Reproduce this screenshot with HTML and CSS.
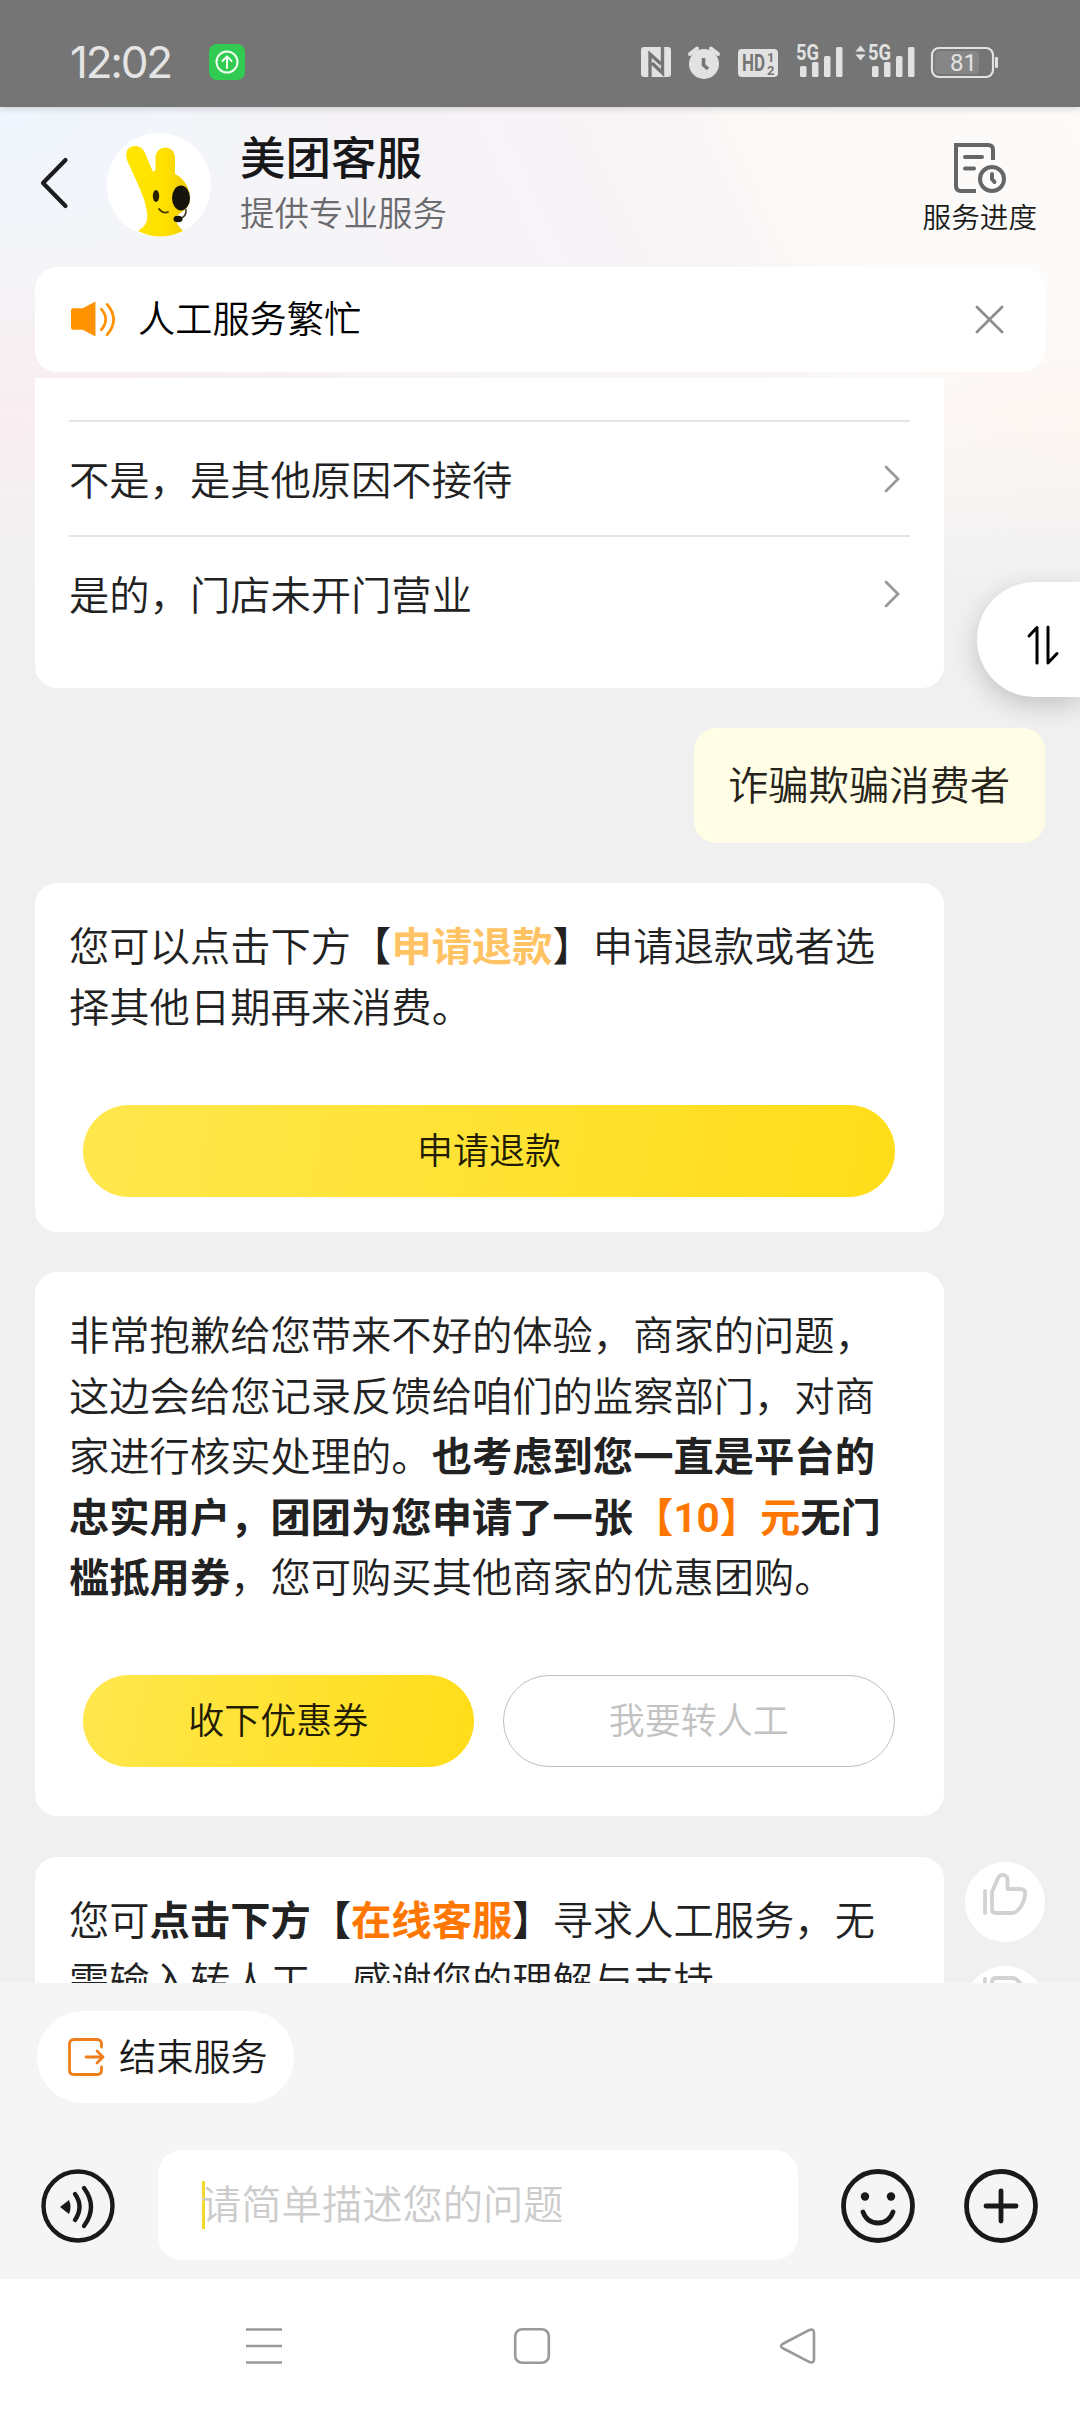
FILE: index.html
```html
<!DOCTYPE html>
<html lang="zh-CN">
<head>
<meta charset="utf-8">
<title>美团客服</title>
<link rel="stylesheet" href="styles.css">
</head>
<body>
<div class="screen">
  <div class="status">
    <span class="clock">12:02</span>
    <svg class="badge" viewBox="0 0 36 36"><rect width="36" height="36" rx="8" fill="#30cb50"/><g fill="none" stroke="#f2fff2" stroke-width="2" stroke-linecap="round" stroke-linejoin="round"><circle cx="18" cy="18" r="10.5"/><path d="M18 24V12.500M13.500 17l4.500-4.500 4.500 4.500"/></g></svg>
    <svg class="signals" viewBox="0 0 360 44" fill="#e2e2e2">
      <rect x="1" y="7" width="30" height="30" rx="3"/>
      <path d="M10 37V14l11 10M22.500 7v26L12 23" fill="none" stroke="#757575" stroke-width="3.400"/>
      <circle cx="64" cy="24" r="15"/>
      <path d="M50 14l7-5.500M78 14l-7-5.500" stroke="#e2e2e2" stroke-width="4" stroke-linecap="round"/>
      <path d="M63.500 18v7l4.500 4" fill="none" stroke="#757575" stroke-width="3.600"/>
      <rect x="98" y="9" width="40" height="28" rx="4"/>
      <g class="hd" fill="#757575"><text x="102" y="31" textLength="23" lengthAdjust="spacingAndGlyphs" font-size="23">HD</text><text x="127" y="22" font-size="13">1</text><text x="127" y="35" font-size="13">2</text></g>
      <g class="net"><text x="156" y="20" textLength="23" lengthAdjust="spacingAndGlyphs">5G</text><text x="228" y="20" textLength="23" lengthAdjust="spacingAndGlyphs">5G</text></g>
      <rect x="160" y="26" width="6.500" height="11" rx="1.500"/><rect x="172" y="22" width="6.500" height="15" rx="1.500"/><rect x="184" y="16" width="6.500" height="21" rx="1.500"/><rect x="196" y="7" width="6.500" height="30" rx="1.500"/>
      <rect x="232" y="26" width="6.500" height="11" rx="1.500"/><rect x="244" y="22" width="6.500" height="15" rx="1.500"/><rect x="256" y="16" width="6.500" height="21" rx="1.500"/><rect x="268" y="7" width="6.500" height="30" rx="1.500"/>
      <path d="M215.500 11.500l5-6 5 6zM215.500 14.500l5 6 5-6z"/>
      <rect x="292" y="8" width="61" height="29" rx="7" fill="none" stroke="#e2e2e2" stroke-width="2.200"/>
      <rect x="295" y="11" width="44" height="23" rx="4" fill="#868686"/>
      <rect x="355" y="17" width="3" height="11" rx="1"/>
      <text class="level" x="310" y="31" font-size="24">81</text>
    </svg>
  </div>

  <header class="header">
    <svg class="back" viewBox="0 0 28 52"><path d="M25.500 3L3 26l22.500 23" fill="none" stroke="#1c1c1e" stroke-width="4.200" stroke-linecap="round" stroke-linejoin="round"/></svg>
    <svg class="avatar" viewBox="0 0 104 104">
      <defs><linearGradient id="skin" x1="0" x2="1"><stop offset="0" stop-color="#ffe600"/><stop offset=".6" stop-color="#ffe100"/><stop offset="1" stop-color="#f0c800"/></linearGradient></defs>
      <circle cx="52" cy="52" r="52" fill="#fff"/>
      <path d="M20 27C15 11 34 9 38 20L46 39L48.500 37L48.500 25C48.500 11 68 11 68 25L68 41C78 46 83 56 83 66C83 76 73 79 69 84C69 92 73 94 76 98Q53 109 31 98C39 93 41 88 40 80C39 66 30 50 20 27Z" fill="url(#skin)"/>
      <ellipse cx="49" cy="63" rx="3.200" ry="6" fill="#2a2100"/>
      <ellipse cx="74" cy="65" rx="9" ry="12.500" fill="#17140d"/>
      <path d="M52 76q4 5 9 3" fill="none" stroke="#4a3900" stroke-width="1.800" stroke-linecap="round"/>
      <path d="M79 76q1 8-7 10" fill="none" stroke="#3b3523" stroke-width="1.500"/>
      <ellipse cx="71" cy="86" rx="4.500" ry="3.300" fill="#17140d"/>
    </svg>
    <div class="who"><h1>美团客服</h1><p>提供专业服务</p></div>
    <div class="progress">
      <svg viewBox="0 0 52 50" fill="none" stroke="#666" stroke-width="4" stroke-linecap="round"><path d="M39 17V7q0-5-5-5H2V43q0 5 5 5h15" stroke-linecap="butt"/><path d="M11 14h17M11 25.500h9M38 31v5l2.500 3"/><circle cx="38" cy="36" r="12"/></svg>
      <span>服务进度</span>
    </div>
  </header>

  <div class="notice">
    <svg class="speaker" viewBox="0 0 46 38" fill="none" stroke="#ff9200" stroke-width="2.800" stroke-linecap="round"><path d="M2 8h10L25 1v36L12 30H2Q0 30 0 28V10Q0 8 2 8z" fill="#ff9200" stroke="none"/><path d="M31 9q9 10.500 0 21M37 4q13 15.500 0 31"/></svg>
    <span>人工服务繁忙</span>
    <svg class="close" viewBox="0 0 30 30"><path d="M2 2l26 26M28 2L2 28" stroke="#8d8d8d" stroke-width="2.800" stroke-linecap="round"/></svg>
  </div>

  <main class="chat">
    <section class="card options">
      <div class="option"><span>不是，是其他原因不接待</span><svg viewBox="0 0 16 28"><path d="M2 2l12 12L2 26"/></svg></div>
      <div class="option"><span>是的，门店未开门营业</span><svg viewBox="0 0 16 28"><path d="M2 2l12 12L2 26"/></svg></div>
    </section>
    <div class="mine">诈骗欺骗消费者</div>
    <section class="card refund">
      <p>您可以点击下方【<b class="soft">申请退款</b>】申请退款或者选<br>择其他日期再来消费。</p>
      <div class="actions"><span class="btn">申请退款</span></div>
    </section>
    <section class="card coupon">
      <p>非常抱歉给您带来不好的体验，商家的问题，<br>这边会给您记录反馈给咱们的监察部门，对商<br>家进行核实处理的。<b>也考虑到您一直是平台的<br>忠实用户，团团为您申请了一张<em>【<i>10</i>】元</em>无门<br>槛抵用券</b>，您可购买其他商家的优惠团购。</p>
      <div class="actions"><span class="btn">收下优惠券</span><span class="btn ghost">我要转人工</span></div>
    </section>
    <div class="rated">
      <section class="card agent">
        <p>您可<b>点击下方【<em>在线客服</em>】</b>寻求人工服务，无<br>需输入转人工，感谢您的理解与支持。</p>
      </section>
      <div class="votes">
        <span><svg viewBox="0 0 44 46"><path d="M2 19v22M9 20L15 6Q17 2 21 3Q25 4 24.500 9V17H37Q43 17 42 23Q41 32 35 38Q33 41 29 41H13Q9 41 9 37Z"/></svg></span>
        <span><svg viewBox="0 0 44 46"><path d="M2 3v22M9 24L15 36Q17 41 21 40Q25 39 24.500 34V26H37Q43 26 42 20Q41 10 35 5Q33 2 29 2H13Q9 2 9 6Z"/></svg></span>
      </div>
    </div>
  </main>

  <div class="composer">
    <div class="quick">
      <svg viewBox="0 0 37 38" fill="none" stroke="#ee7d1c" stroke-width="2.800" stroke-linecap="round" stroke-linejoin="round"><path d="M33.500 9V6q0-4.500-4.500-4.500H6Q1.500 1.500 1.500 6V32q0 4.500 4.500 4.500H29q4.500 0 4.500-4.500v-3M18 19h17M29 13l6 6-6 6"/></svg>
      <span>结束服务</span>
    </div>
    <div class="entry">
      <svg class="round" viewBox="0 0 74 74" fill="none" stroke="#191919" stroke-width="4.400" stroke-linecap="round"><circle cx="37" cy="37" r="34.500"/><path d="M19 38l9-7q3 7 0 14z" fill="#191919" stroke="none"/><path d="M34 25q9 12.500 0 26M43 19q14 19 0 38"/></svg>
      <div class="field"><i class="caret"></i><span>请简单描述您的问题</span></div>
      <svg class="round smile" viewBox="0 0 74 74" fill="none" stroke="#191919" stroke-width="4.800" stroke-linecap="round"><circle cx="37" cy="37" r="34.500"/><path d="M22 43q4 11 15 11t15-11"/><g fill="#191919" stroke="none"><circle cx="24" cy="27.500" r="4.200"/><circle cx="50" cy="27.500" r="4.200"/></g></svg>
      <svg class="round" viewBox="0 0 74 74" fill="none" stroke="#191919" stroke-width="4.800" stroke-linecap="round"><circle cx="37" cy="37" r="34.500"/><path d="M22 37h30M37 22v30"/></svg>
    </div>
  </div>

  <nav class="nav">
    <svg viewBox="0 0 36 36"><path d="M0 1.500h36M0 18h36M0 34.500h36"/></svg>
    <svg viewBox="0 0 36 36"><rect x="1.200" y="1.200" width="33.600" height="33.600" rx="7"/></svg>
    <svg viewBox="0 0 36 36"><path d="M.5 16L27 2.200Q32 0 32 5V31Q32 36 27 33.800L.5 20Q-2.500 18 .5 16z"/></svg>
  </nav>

  <div class="float"><svg viewBox="0 0 32 40" fill="none" stroke="#000" stroke-width="3" stroke-linecap="round" stroke-linejoin="round"><path d="M2 11l8-8.500V38M21 2v36l9-9.500"/></svg></div>
</div>
</body>
</html>
```
FILE: styles.css
```css
* { box-sizing: border-box; margin: 0; padding: 0; }
body { font-family: "Noto Sans CJK SC", "Noto Sans", sans-serif; font-weight: 350; color: #222; text-spacing-trim: space-all; }
svg { display: block; flex: none; overflow: visible; }
.screen {
  position: relative; width: 1080px; height: 2412px; overflow: hidden; display: flex; flex-direction: column;
  background:
    linear-gradient(#f0f0f000 420px, #f0f0f0 600px),
    radial-gradient(ellipse 330px 200px at 0 110px, #f0f6fd 10%, #f0f6fd00),
    radial-gradient(ellipse 620px 180px at 0 430px, #f9edf1, #f9edf100),
    radial-gradient(ellipse 320px 150px at 1080px 440px, #fdf5f1, #fdf5f100),
    linear-gradient(65deg, #f5f4f7 0 1180px, #f8f3f6 1300px, #f9f3f5 1400px, #fcfaf9 1480px, #fcfbf9 100%) 0 0 / 1080px 620px no-repeat,
    #f0f0f0;
  background-image:
    linear-gradient(#f0f0f000 420px, #f0f0f0 600px),
    radial-gradient(ellipse 330px 200px at 0 110px, #f0f6fd 10%, #f0f6fd00),
    radial-gradient(ellipse 620px 180px at 0 430px, #f9edf1, #f9edf100),
    radial-gradient(ellipse 320px 150px at 1080px 440px, #fdf5f1, #fdf5f100),
    linear-gradient(65deg, #f5f4f7 0 35%, #f8f3f6 58%, #f9f4f5 66%, #fcfaf9 72%, #fcfbf9 100%);
}
.status { flex: none; height: 107px; background: #757575; box-shadow: 0 1px 8px #0000002e; display: flex; align-items: center; padding: 17px 80px 0 70px; z-index: 1; }
.clock { font: 44px/44px Inter, Roboto, sans-serif; color: #e4e4e4; width: 139px; letter-spacing: -2.200px; }
.badge { width: 36px; height: 36px; }
.signals { width: 360px; height: 44px; margin-left: auto; font-family: Roboto, sans-serif; }
.hd { font-weight: 700; }
.net { font-size: 21.500px; font-weight: 700; }
.level { font-weight: 400; }

.header { flex: none; height: 160px; display: flex; align-items: center; padding: 0 43px 8px 40px; }
.back { width: 28px; height: 52px; }
.avatar { width: 104px; height: 104px; margin: 4px 29px 0 39px; }
.who h1 { font-size: 45.500px; line-height: 54px; font-weight: 500; color: #18181a; }
.who p { font-size: 34.500px; line-height: 54px; color: #6b6a6d; padding-top: 2px; }
.progress { margin-left: auto; display: flex; flex-direction: column; align-items: center; font-size: 28.600px; line-height: 44px; color: #1a1a1a; padding-top: 14px; }
.progress svg { width: 52px; height: 50px; margin-bottom: 1px; }

.notice { flex: none; height: 105px; margin: 0 35px 5px; padding: 0 41px 0 36px; border-radius: 22px; background: #fff; display: flex; align-items: center; font-size: 37.200px; color: #000; }
.speaker { width: 45px; height: 38px; margin: 0 22px 2px 0; }
.notice span { line-height: 40px; padding-bottom: 5px; }
.close { width: 29px; height: 29px; margin-left: auto; }

.chat { flex: 1; min-height: 0; overflow: hidden; padding: 1px 35px 0; display: flex; flex-direction: column; align-items: flex-start; gap: 40px; font-size: 40.300px; line-height: 60.500px; white-space: nowrap; }
.card { flex: none; width: 909px; background: #fff; border-radius: 22px; padding: 31px 34px 0; }
.options { height: 310px; border-radius: 0 0 22px 22px; padding-top: 42px; }
.option { height: 115px; border-top: 2px solid #e5e5e5; display: flex; justify-content: space-between; align-items: center; padding-right: 10px; }
.option span { padding-bottom: 1px; }
.option svg { width: 16px; height: 28px; fill: none; stroke: #999; stroke-width: 2.800; stroke-linecap: round; }
.mine { flex: none; align-self: flex-end; width: 351px; height: 115px; border-radius: 22px; background: #fffde6; padding: 25px 34px; color: #26241a; }
.refund { height: 349px; }
.coupon { height: 544px; }
em, i { font-style: normal; }
em { color: #ff7700; }
i { font-family: Roboto, sans-serif; line-height: 0; }
.soft { color: #ffc363; }
.actions { display: flex; gap: 29px; padding: 0 15px 0 14px; }
.refund .actions { margin-top: 70px; }
.coupon .actions { margin-top: 69px; }
.btn { flex: 1; height: 92px; line-height: 87px; border-radius: 46px; text-align: center; font-size: 36px; color: #221c05; background: linear-gradient(100deg, #ffe74d, #ffdd19); }
.ghost { background: #fff; border: 1px solid #bfbfbf; line-height: 85px; color: #c2c2c2; }
.rated { flex: none; display: flex; gap: 21px; margin-top: 1px; }
.agent { height: 220px; }
.votes { display: flex; flex-direction: column; gap: 24px; padding-top: 5px; }
.votes span { width: 80px; height: 80px; border-radius: 50%; background: #fff; display: flex; justify-content: center; padding-top: 10px; }
.votes svg { width: 44px; height: 46px; fill: none; stroke: #d2d2d2; stroke-width: 3.800; stroke-linecap: round; stroke-linejoin: round; }

.composer { flex: none; height: 296px; background: #f5f5f5; padding: 28px 42px 0 37px; }
.quick { width: 257px; height: 92px; border-radius: 46px; background: #fff; display: flex; align-items: center; gap: 14px; padding-left: 31px; font-size: 37.200px; line-height: 40px; color: #1a1a1a; }
.quick svg { width: 37px; height: 38px; }
.quick span { padding-bottom: 5px; }
.entry { display: flex; align-items: center; margin: 47px 0 0 4px; }
.round { width: 74px; height: 74px; margin-top: 2px; }
.smile { margin: 2px 49px 0 43px; }
.field { width: 640px; height: 110px; margin-left: 43px; border-radius: 24px; background: #fff; display: flex; align-items: center; padding-left: 44px; color: #ccc; font-size: 40.300px; line-height: 44px; }
.field span { padding-bottom: 6px; margin-left: -4px; }
.caret { width: 3px; height: 48px; background: #f3d92e; }
.nav { flex: none; height: 133px; background: #fff; display: flex; gap: 232px; padding: 49px 0 0 246px; }
.nav svg { width: 36px; height: 36px; fill: none; stroke: #999; stroke-width: 2.600; stroke-linejoin: round; }
.float { position: absolute; top: 582px; right: 0; width: 103px; height: 115px; border-radius: 58px 0 0 58px; background: #fff; box-shadow: 0 8px 26px #00000030; padding: 43px 0 0 50px; }
.float svg { width: 32px; height: 40px; }
```
